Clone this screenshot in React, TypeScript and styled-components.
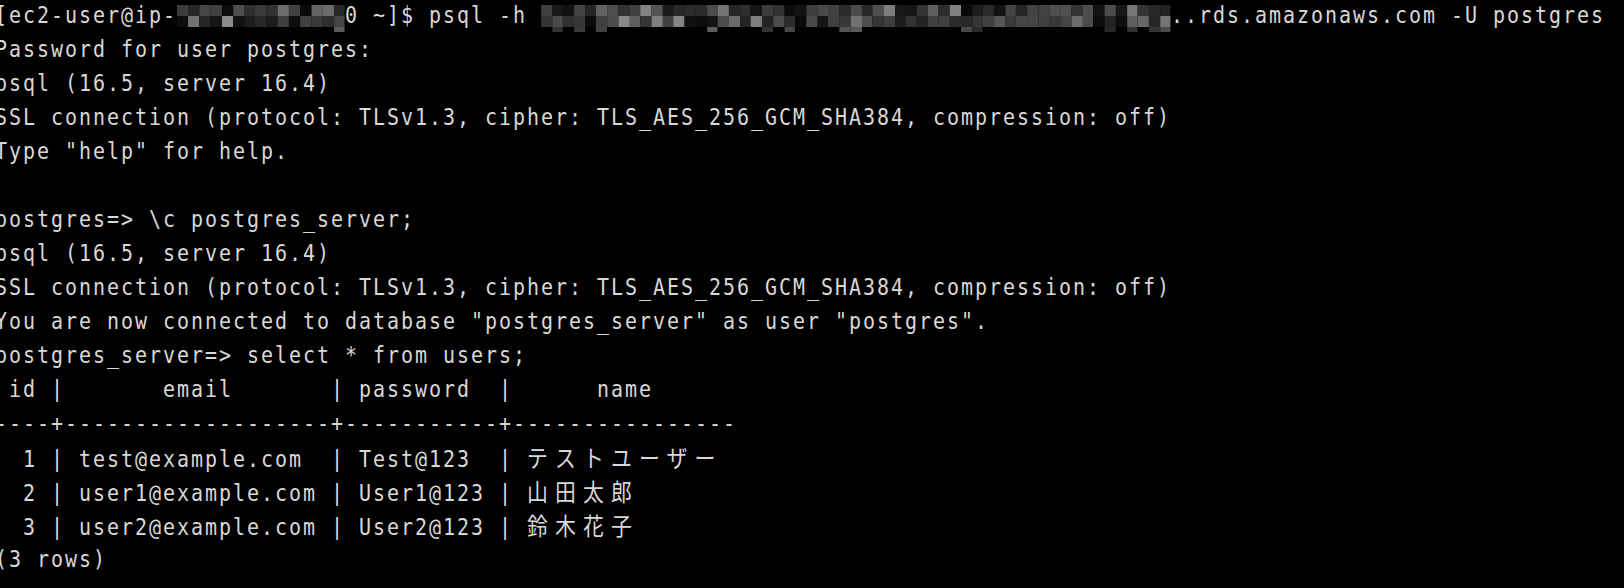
import React from "react";
import styled, { createGlobalStyle } from "styled-components";

const SCALE = 20 / 23;
const CELL = 14 / SCALE;

const Global = createGlobalStyle`
  html, body {
    margin: 0;
    padding: 0;
    background: #000;
  }
  #root {
    min-height: 100vh;
    background: #000;
    overflow: hidden;
  }
`;

const Screen = styled.div`
  width: 1624px;
  height: 588px;
  background: #000;
  overflow: hidden;
`;

const Terminal = styled.div`
  display: flex;
  flex-direction: column;
  margin-top: -2px;
  margin-left: -5px;
  width: ${1640 / SCALE}px;
  transform: scaleX(${SCALE});
  transform-origin: 0 0;
  color: #d8d8d8;
  font-family: "DejaVu Sans Mono", "Liberation Mono", monospace;
  font-size: 23px;
  letter-spacing: ${CELL - 23 * 0.60205}px;
`;

const Line = styled.div`
  height: 34px;
  line-height: 34px;
  white-space: pre;
`;

const Wide = styled.span`
  font-family: "Noto Sans CJK JP", "Noto Sans CJK SC", sans-serif;
  font-size: 24px;
  letter-spacing: ${2 * CELL - 24}px;
`;

const Mosaic = styled.span<{ $chars: number }>`
  display: inline-grid;
  vertical-align: top;
  width: ${(p) => p.$chars * CELL}px;
  height: 34px;
  padding-top: 7px;
  box-sizing: border-box;
  grid-template-rows: 11px 11px 6px;
  grid-auto-flow: column;
  overflow: hidden;
`;

const Cell = styled.span`
  display: block;
`;

function seeded(seed: number) {
  let s = seed;
  return () => {
    s = (s * 9301 + 49297) % 233280;
    return s / 233280;
  };
}

function Blur({ chars, seed }: { chars: number; seed: number }) {
  const rnd = seeded(seed);
  const cols = Math.floor((chars * 14) / 11);
  const cells: React.ReactNode[] = [];
  for (let c = 0; c < cols; c++) {
    for (let r = 0; r < 3; r++) {
      const v = rnd();
      let g: number;
      if (r === 2) {
        g = v < 0.8 ? 0 : 35 + Math.floor(rnd() * 60);
      } else if (v < 0.2) {
        g = 10 + Math.floor(rnd() * 20);
      } else if (v < 0.8) {
        g = 35 + Math.floor(rnd() * 45);
      } else {
        g = 80 + Math.floor(rnd() * 60);
      }
      cells.push(
        <Cell key={`${c}-${r}`} style={{ background: `rgb(${g},${g},${g})` }} />
      );
    }
  }
  return (
    <Mosaic $chars={chars} style={{ gridTemplateColumns: `repeat(${cols}, 1fr)` }}>
      {cells}
    </Mosaic>
  );
}

export default function App() {
  return (
    <Screen>
      <Global />
      <Terminal>
        <Line>
          {"[ec2-user@ip-"}
          <Blur chars={12} seed={7} />
          {"0 ~]$ psql -h "}
          <Blur chars={45} seed={31} />
          {"..rds.amazonaws.com -U postgres"}
        </Line>
        <Line>Password for user postgres:</Line>
        <Line>psql (16.5, server 16.4)</Line>
        <Line>SSL connection (protocol: TLSv1.3, cipher: TLS_AES_256_GCM_SHA384, compression: off)</Line>
        <Line>Type "help" for help.</Line>
        <Line> </Line>
        <Line>{"postgres=> \\c postgres_server;"}</Line>
        <Line>psql (16.5, server 16.4)</Line>
        <Line>SSL connection (protocol: TLSv1.3, cipher: TLS_AES_256_GCM_SHA384, compression: off)</Line>
        <Line>You are now connected to database "postgres_server" as user "postgres".</Line>
        <Line>postgres_server=&gt; select * from users;</Line>
        <Line>{" id |       email       | password  |      name"}</Line>
        <Line>{"----+-------------------+-----------+----------------"}</Line>
        <Line>
          {"  1 | test@example.com  | Test@123  | "}
          <Wide>テストユーザー</Wide>
        </Line>
        <Line>
          {"  2 | user1@example.com | User1@123 | "}
          <Wide>山田太郎</Wide>
        </Line>
        <Line>
          {"  3 | user2@example.com | User2@123 | "}
          <Wide>鈴木花子</Wide>
        </Line>
        <Line>(3 rows)</Line>
      </Terminal>
    </Screen>
  );
}
